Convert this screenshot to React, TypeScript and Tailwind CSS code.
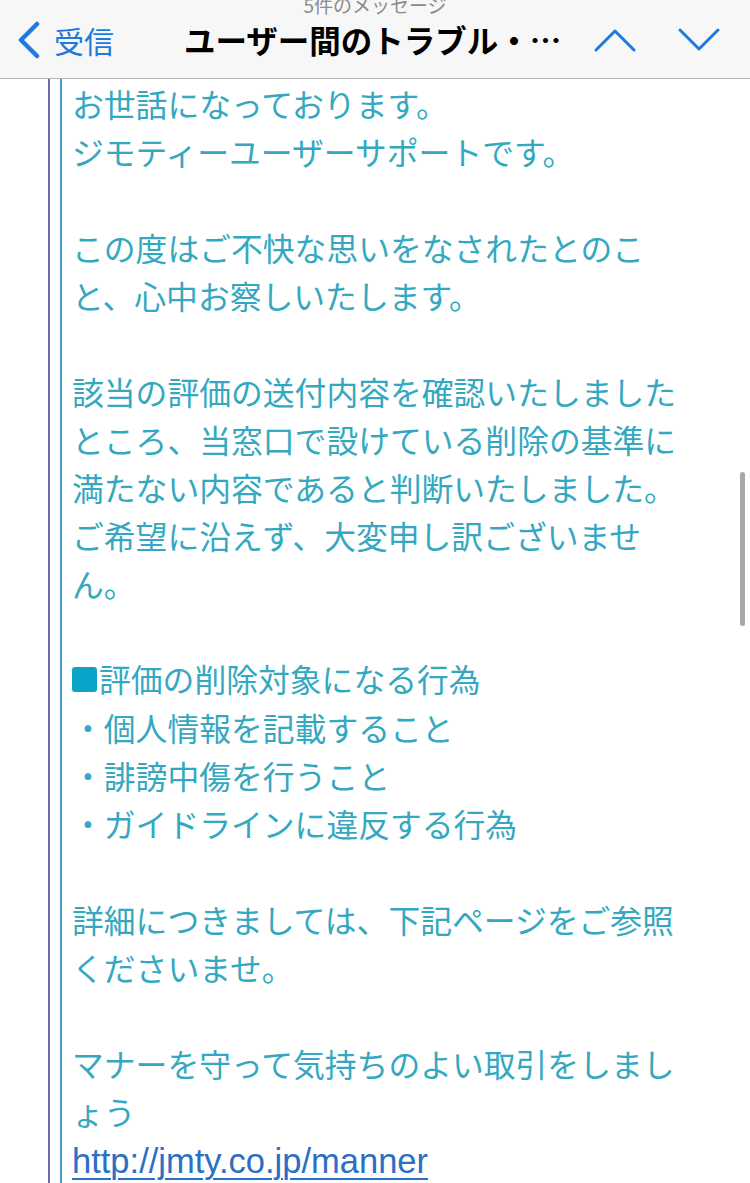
const LINES: string[] = [
  'お世話になっております。',
  'ジモティーユーザーサポートです。',
  '',
  'この度はご不快な思いをなされたとのこ',
  'と、心中お察しいたします。',
  '',
  '該当の評価の送付内容を確認いたしました',
  'ところ、当窓口で設けている削除の基準に',
  '満たない内容であると判断いたしました。',
  'ご希望に沿えず、大変申し訳ございませ',
  'ん。',
  '',
  '■評価の削除対象になる行為',
  '・個人情報を記載すること',
  '・誹謗中傷を行うこと',
  '・ガイドラインに違反する行為',
  '',
  '詳細につきましては、下記ページをご参照',
  'くださいませ。',
  '',
  'マナーを守って気持ちのよい取引をしまし',
  'ょう',
];

function Line({ text }: { text: string }) {
  if (text === '') return <div className="h-[48px]" />;
  if (text.startsWith('■')) {
    return (
      <div className="flex h-[48px] items-center whitespace-nowrap">
        <span className="mr-[2px] inline-block h-[25px] w-[25px] rounded-[3px] bg-[#0aa4c8]" />
        <span>{text.slice(1)}</span>
      </div>
    );
  }
  return <div className="h-[48px] whitespace-nowrap leading-[48px]">{text}</div>;
}

export default function App() {
  return (
    <div className="relative h-[1183px] w-[750px] overflow-hidden bg-white font-['Noto_Sans_CJK_JP',sans-serif]">
      <header className="relative h-[79px] border-b border-[#b5b5b5] bg-[#f7f7f7]">
        <div className="absolute left-0 right-0 top-[-9px] text-center text-[19px] text-[#8c8c8c]">5件のメッセージ</div>
        <div className="flex h-full items-center pt-[2px]">
          <div className="flex items-center pl-[16px] text-[#1f7ae0]">
            <svg width="26" height="38" viewBox="0 0 26 38" fill="none">
              <path d="M21 3 L5 19 L21 35" stroke="currentColor" strokeWidth="4.5" strokeLinecap="round" strokeLinejoin="round" />
            </svg>
            <span className="ml-[12px] text-[30px] leading-none">受信</span>
          </div>
          <div className="ml-[70px] whitespace-nowrap text-[31.5px] font-bold leading-none text-black">ユーザー間のトラブル・…</div>
          <div className="ml-[32px] flex items-center gap-[40px] text-[#1f7ae0]">
            <svg width="44" height="26" viewBox="0 0 44 26" fill="none">
              <path d="M3 23 L22 4 L41 23" stroke="currentColor" strokeWidth="3" strokeLinecap="round" strokeLinejoin="round" />
            </svg>
            <svg width="44" height="26" viewBox="0 0 44 26" fill="none">
              <path d="M3 3 L22 22 L41 3" stroke="currentColor" strokeWidth="3" strokeLinecap="round" strokeLinejoin="round" />
            </svg>
          </div>
        </div>
      </header>
      <main className="pl-[48px]">
        <div className="border-l-[2px] border-[#6c6ca8] pl-[10px]">
          <div className="min-h-[1104px] border-l-[2px] border-[#3aa3bb] pl-[10px] text-[31.8px] text-[#34a8c0]">
            {LINES.map((t, i) => (
              <Line key={i} text={t} />
            ))}
            <div className="h-[48px] leading-[48px]">
              <a href="#" className="font-['Liberation_Sans',sans-serif] text-[34.5px] text-[#2b6ec6] underline decoration-2 underline-offset-[5px]">
                http://jmty.co.jp/manner
              </a>
            </div>
          </div>
        </div>
      </main>
      <div className="absolute right-[5px] top-[472px] h-[154px] w-[5px] rounded-full bg-[#a8a8a8]" />
    </div>
  );
}
